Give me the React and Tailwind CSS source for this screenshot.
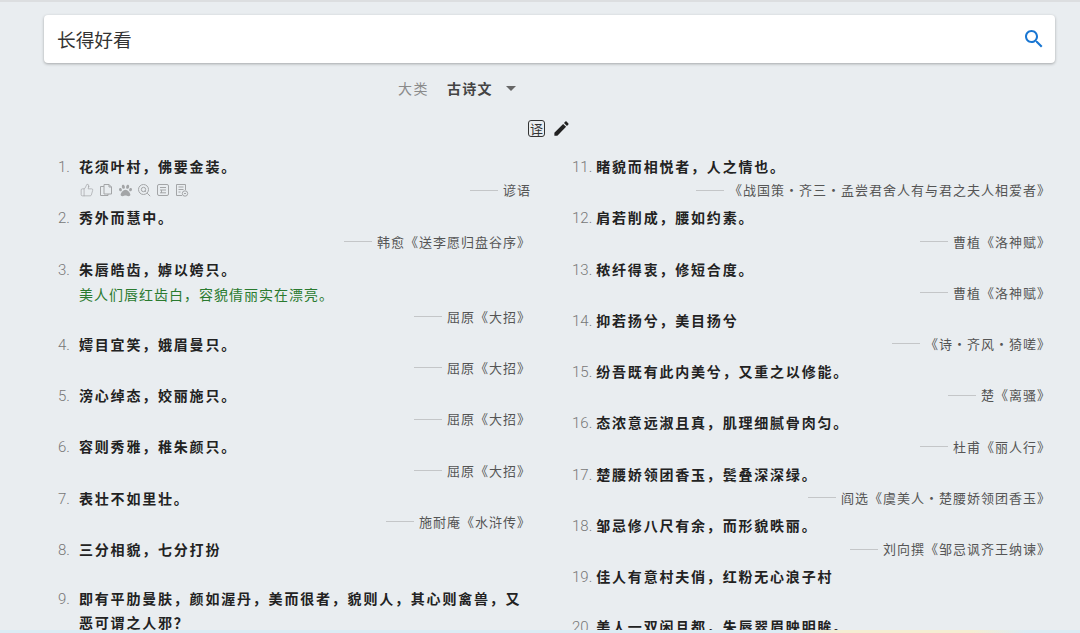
import { ThumbsUp } from "lucide-react";
import { FaPaw } from "react-icons/fa";

const leftItems = [
  { n: 1, text: "花须叶村，佛要金装。", source: "谚语", tools: true },
  { n: 2, text: "秀外而慧中。", source: "韩愈《送李愿归盘谷序》" },
  { n: 3, text: "朱唇皓齿，嫭以姱只。", note: "美人们唇红齿白，容貌倩丽实在漂亮。", source: "屈原《大招》" },
  { n: 4, text: "嫮目宜笑，娥眉曼只。", source: "屈原《大招》" },
  { n: 5, text: "滂心绰态，姣丽施只。", source: "屈原《大招》" },
  { n: 6, text: "容则秀雅，稚朱颜只。", source: "屈原《大招》" },
  { n: 7, text: "表壮不如里壮。", source: "施耐庵《水浒传》" },
  { n: 8, text: "三分相貌，七分打扮" },
  { n: 9, text: "即有平肋曼肤，颜如渥丹，美而很者，貌则人，其心则禽兽，又恶可谓之人邪？" },
];

const rightItems = [
  { n: 11, text: "睹貌而相悦者，人之情也。", source: "《战国策・齐三・孟尝君舍人有与君之夫人相爱者》" },
  { n: 12, text: "肩若削成，腰如约素。", source: "曹植《洛神赋》" },
  { n: 13, text: "秾纤得衷，修短合度。", source: "曹植《洛神赋》" },
  { n: 14, text: "抑若扬兮，美目扬兮", source: "《诗・齐风・猗嗟》" },
  { n: 15, text: "纷吾既有此内美兮，又重之以修能。", source: "楚《离骚》" },
  { n: 16, text: "态浓意远淑且真，肌理细腻骨肉匀。", source: "杜甫《丽人行》" },
  { n: 17, text: "楚腰娇领团香玉，鬓叠深深绿。", source: "阎选《虞美人・楚腰娇领团香玉》" },
  { n: 18, text: "邹忌修八尺有余，而形貌昳丽。", source: "刘向撰《邹忌讽齐王纳谏》" },
  { n: 19, text: "佳人有意村夫俏，红粉无心浪子村" },
  { n: 20, text: "美人一双闲且都，朱唇翠眉映明眸。" },
];

function CopyIcon() {
  return (
    <svg width="14" height="14" viewBox="0 0 14 14" fill="none" stroke="currentColor" strokeWidth="1">
      <path d="M5 3.5H1.5v9H9V11" />
      <path d="M5 1.5h5l2.5 2.5v7H5z" />
      <path d="M10 1.5V4h2.5" />
    </svg>
  );
}

function LensIcon() {
  return (
    <svg width="14" height="14" viewBox="0 0 14 14" fill="none" stroke="currentColor" strokeWidth="1">
      <circle cx="6.5" cy="6.5" r="5" />
      <circle cx="6.5" cy="6.5" r="2.2" />
      <path d="M10.2 10.2l3 3M7.8 7.8l1 1" />
    </svg>
  );
}

function ListIcon() {
  return (
    <svg width="14" height="14" viewBox="0 0 14 14" fill="none" stroke="currentColor" strokeWidth="1">
      <rect x="1.5" y="1.5" width="11" height="11" rx="1.5" />
      <path d="M4 4.5h6M4 7h6M5.5 7v3M4 9.8h6" />
    </svg>
  );
}

function NoteIcon() {
  return (
    <svg width="14" height="14" viewBox="0 0 14 14" fill="none" stroke="currentColor" strokeWidth="1">
      <path d="M7 12.5H1.5v-11h9V7" />
      <path d="M3.5 4h5M3.5 6.5h5M3.5 9h2" />
      <circle cx="10" cy="10.5" r="2.7" />
      <path d="M9 10.5h2" />
    </svg>
  );
}

function Tools() {
  return (
    <div className="flex items-center gap-[5px] text-[#a3a5a7]">
      <ThumbsUp size={14} strokeWidth={1.2} />
      <CopyIcon />
      <FaPaw size={13} className="mx-[0.5px]" />
      <LensIcon />
      <ListIcon />
      <NoteIcon />
    </div>
  );
}

function Item({ item }) {
  return (
    <li className="pb-[5.3px]">
      <div className="flex gap-[4px]">
        <span className="min-w-[17px] shrink-0 font-['Roboto'] text-[15px] font-light leading-[24px] text-[#777]">{item.n}.</span>
        <span className="text-[14px] font-bold leading-[23.5px] tracking-[1.8px] text-[#222]">{item.text}</span>
      </div>
      {item.note && (
        <div className="ml-[21px] text-[14px] leading-[24px] tracking-[1px] text-[#2a7a2f]">{item.note}</div>
      )}
      {item.source ? (
        <div className="flex h-[22px] items-center">
          {item.tools && (
            <div className="ml-[22px]">
              <Tools />
            </div>
          )}
          <div className="ml-auto flex items-center text-[13px] tracking-[1px] text-[#555]">
            <span className="mr-[5px] h-px w-[28px] bg-[#c4c6c8]" />
            {item.source}
          </div>
        </div>
      ) : (
        <div className="h-[20px]" />
      )}
    </li>
  );
}

export default function App() {
  return (
    <div className="relative h-[633px] overflow-hidden border-t-2 border-[#dcdee0] bg-[#e9edf0] font-['Noto_Sans_CJK_SC',sans-serif]">
      <div className="pl-[44px] pr-[25px] pt-[13px]">
        <div className="flex h-[48px] items-center justify-between rounded-[4px] bg-white pl-[13px] pr-[9px] shadow-[0_1px_3px_rgba(0,0,0,0.3)]">
          <span className="text-[18.7px] text-[#333]">长得好看</span>
          <svg width="24" height="24" viewBox="0 0 24 24" fill="#1976d2">
            <path d="M15.5 14h-.79l-.28-.27C15.41 12.59 16 11.11 16 9.5 16 5.91 13.09 3 9.5 3S3 5.91 3 9.5 5.91 16 9.5 16c1.61 0 3.09-.59 4.23-1.57l.27.28v.79l5 4.99L20.49 19l-4.99-5zm-6 0C7.01 14 5 11.99 5 9.5S7.01 5 9.5 5 14 7.01 14 9.5 11.99 14 9.5 14z" />
          </svg>
        </div>
      </div>

      <div className="mt-[13px] flex h-[24px] items-center pl-[398px]">
        <span className="text-[14px] tracking-[1.5px] text-[#8a8a8a]">大类</span>
        <span className="ml-[18px] text-[14px] font-bold tracking-[1.3px] text-[#444]">古诗文</span>
        <span className="ml-[13px] h-0 w-0 border-x-[5px] border-t-[5px] border-x-transparent border-t-[#666]" />
      </div>

      <div className="mt-[17px] flex h-[22px] items-center gap-[7px] pl-[528px]">
        <span className="flex h-[17px] w-[17px] items-center justify-center rounded-[3px] border border-[#333] text-[13px] leading-none text-[#333]">译</span>
        <svg width="19" height="19" viewBox="0 0 24 24" fill="#222">
          <path d="M3 17.25V21h3.75L17.81 9.94l-3.75-3.75L3 17.25zM20.71 7.04c.39-.39.39-1.02 0-1.41l-2.34-2.34c-.39-.39-1.02-.39-1.41 0l-1.83 1.83 3.75 3.75 1.83-1.83z" />
        </svg>
      </div>

      <div className="mt-[16px] grid grid-cols-[473px_479px] gap-x-[41px] pl-[58px]">
        <ul>
          {leftItems.map((item) => (
            <Item key={item.n} item={item} />
          ))}
        </ul>
        <ul>
          {rightItems.map((item) => (
            <Item key={item.n} item={item} />
          ))}
        </ul>
      </div>

      <div className="absolute inset-x-0 bottom-0 h-[3px] bg-[linear-gradient(90deg,#dcecf5_0%,#dcecf5_72%,#f5edd2_78%,#f5edd2_90%,#dcecf5_95%)]" />
    </div>
  );
}
